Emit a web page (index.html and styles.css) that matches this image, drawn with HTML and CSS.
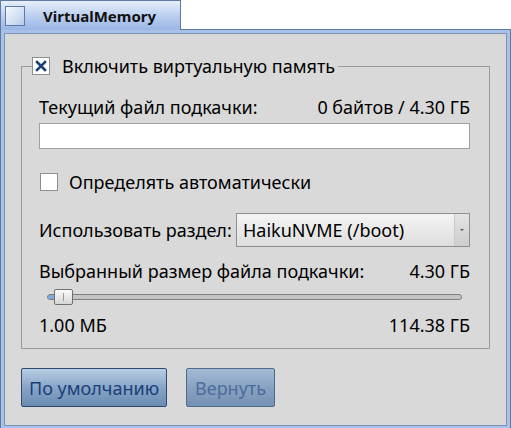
FILE: index.html
```html
<!DOCTYPE html>
<html lang="ru">
<head>
  <meta charset="UTF-8">
  <title>VirtualMemory</title>
  <link rel="stylesheet" href="styles.css">
</head>
<body>
  <div class="tab">
    <span class="close"></span>
    <span class="title">VirtualMemory</span>
  </div>
  <div class="window">
    <div class="content">
      <fieldset class="box">
        <legend class="legend">
          <span class="check checked">
            <svg width="12" height="12" viewBox="0 0 12 12"><path d="M2 2 L10 10 M10 2 L2 10" stroke="#1c3f74" stroke-width="2.6" stroke-linecap="square"/></svg>
          </span>
          Включить виртуальную память
        </legend>

        <div class="row first">
          <span>Текущий файл подкачки:</span>
          <span>0 байтов / 4.30 ГБ</span>
        </div>
        <div class="bar"></div>

        <label class="auto">
          <span class="check"></span>
          Определять автоматически
        </label>

        <div class="row part">
          <span>Использовать раздел:</span>
          <div class="menu">
            <span>HaikuNVME (/boot)</span>
            <span class="arrow"></span>
          </div>
        </div>

        <div class="row size">
          <span>Выбранный размер файла подкачки:</span>
          <span>4.30 ГБ</span>
        </div>
        <div class="slider">
          <div class="rail"><div class="fill"></div></div>
          <div class="thumb"><span></span></div>
        </div>
        <div class="row limits">
          <span>1.00 МБ</span>
          <span>114.38 ГБ</span>
        </div>
      </fieldset>

      <div class="buttons">
        <button class="btn">По умолчанию</button>
        <button class="btn off">Вернуть</button>
      </div>
    </div>
  </div>
</body>
</html>
```

FILE: styles.css
```css
html, body {
  margin: 0;
  background: #fff;
}
body {
  font-family: "Noto Sans", "DejaVu Sans", sans-serif;
  font-size: 18px;
  color: #000;
  width: 511px;
  height: 428px;
  overflow: hidden;
}
.tab {
  width: 179px;
  height: 29px;
  border: 1px solid #5d7aa3;
  border-bottom: none;
  background: linear-gradient(#e6eefa, #b9cdef 55%, #98b6e5);
  display: flex;
  align-items: center;
  position: relative;
  z-index: 1;
  margin-bottom: -1px;
}
.close {
  width: 18px;
  height: 18px;
  margin-left: 4px;
  border: 1px solid #5d7aa3;
  background: linear-gradient(135deg, #f6f9fe, #b8cbeb);
}
.title {
  font-size: 15px;
  font-weight: bold;
  margin-left: 18px;
  color: #111;
}
.window {
  height: 393px;
  border: 1px solid #5d7aa3;
  background: #a7c1e8;
  padding: 3px;
}
.content {
  height: 391px;
  border: 1px solid #7b93b6;
  background: #d9d9d9;
  padding: 0 16px;
}
.box {
  margin: 20px 0 0;
  border: 1px solid #9a9a9a;
  padding: 0 19px 11px 17px;
}
.legend {
  display: flex;
  align-items: center;
  gap: 12px;
  padding: 0 3px 0 0;
  margin-left: -7px;
  line-height: 24px;
}
.check {
  width: 16px;
  height: 16px;
  border: 1px solid #8e8e8e;
  background: #fff;
  display: flex;
  align-items: center;
  justify-content: center;
  flex-shrink: 0;
}
.row {
  display: flex;
  justify-content: space-between;
  align-items: center;
  line-height: 24px;
}
.first {
  margin-top: 17px;
}
.bar {
  height: 24px;
  margin-top: 4px;
  border: 1px solid #a0a0a0;
  background: #fff;
}
.auto {
  display: flex;
  align-items: center;
  gap: 11px;
  margin: 21px 0 0 1px;
  line-height: 24px;
}
.part {
  margin-top: 19px;
}
.menu {
  width: 234px;
  height: 34px;
  border: 1px solid #8f8f8f;
  background: linear-gradient(#f4f4f4, #dedede);
  display: flex;
  align-items: center;
  justify-content: space-between;
  padding-left: 6px;
  box-sizing: border-box;
}
.arrow {
  width: 14px;
  height: 32px;
  border-left: 1px solid #cacaca;
  background: linear-gradient(#e4e4e4, #cdcdcd);
  position: relative;
}
.arrow::after {
  content: "";
  position: absolute;
  left: 5px;
  top: 15px;
  border: 2px solid transparent;
  border-top-color: #555;
  border-bottom: none;
}
.size {
  margin-top: 12px;
}
.slider {
  position: relative;
  height: 28px;
  margin: 0 8px;
}
.rail {
  position: absolute;
  left: 0;
  right: 0;
  top: 11px;
  height: 4px;
  border: 1px solid #7e7e7e;
  border-radius: 3px;
  background: #c4c4c4;
}
.fill {
  width: 12px;
  height: 4px;
  border-radius: 3px 0 0 3px;
  background: #7fa7df;
}
.thumb {
  position: absolute;
  left: 7px;
  top: 6px;
  width: 17px;
  height: 14px;
  border: 1px solid #707070;
  border-radius: 2px;
  background: linear-gradient(#fafafa, #d6d6d6);
  display: flex;
  justify-content: center;
  align-items: center;
}
.thumb span {
  width: 1px;
  height: 8px;
  background: #999;
}
.limits {
  margin-top: 2px;
}
.buttons {
  display: flex;
  gap: 19px;
  margin-top: 19px;
}
.btn {
  font-family: inherit;
  font-size: 18px;
  height: 39px;
  padding: 0 7px;
  border: 1px solid #2f4a6e;
  border-radius: 2px;
  background: linear-gradient(#b9cde4, #88a5c7 50%, #6a8cb2);
  color: #1b3f78;
}
.btn.off {
  padding: 0 8px;
  border-color: #4f6a8d;
  background: linear-gradient(#a5bbd5, #88a2c1 50%, #7591b3);
  color: #4b6c9c;
}
```
